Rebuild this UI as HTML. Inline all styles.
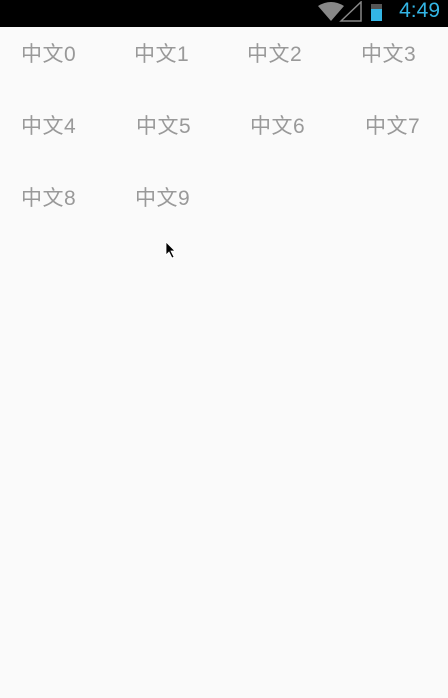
<!DOCTYPE html>
<html><head><style>
body{margin:0;width:448px;height:698px;background:#fafafa;position:relative;overflow:hidden;font-family:"Liberation Sans","Noto Sans CJK SC",sans-serif}
.sb{position:absolute;left:0;top:0;width:448px;height:27px;background:#000}
.t{position:absolute;font-size:21px;color:#999;line-height:24px;white-space:nowrap;letter-spacing:0.5px}
.clk{position:absolute;right:8px;top:0;color:#33b5e5;font-size:21px;line-height:22px}
</style></head><body>
<div class="sb">
<svg style="position:absolute;left:317px;top:1px" width="72" height="22">
<path d="M1 5 Q14 -3 27 5 L14 20 Z" fill="#888"/>
<path d="M24 20 L44 1 L44 20 Z" fill="none" stroke="#888" stroke-width="1.5"/>
<rect x="54" y="3" width="11" height="17" fill="#33b5e5"/>
<rect x="54" y="3" width="11" height="5" fill="#555"/>
</svg>
<div class="clk">4:49</div>
</div>
<div class="t" style="left:21px;top:43px">中文0</div>
<div class="t" style="left:134px;top:43px">中文1</div>
<div class="t" style="left:247px;top:43px">中文2</div>
<div class="t" style="left:361px;top:43px">中文3</div>
<div class="t" style="left:21px;top:115px">中文4</div>
<div class="t" style="left:136px;top:115px">中文5</div>
<div class="t" style="left:250px;top:115px">中文6</div>
<div class="t" style="left:365px;top:115px">中文7</div>
<div class="t" style="left:21px;top:187px">中文8</div>
<div class="t" style="left:135px;top:187px">中文9</div>
<svg style="position:absolute;left:165px;top:241px" width="12" height="18"><path d="M1 1 L1 14 L4 11 L7 17 L9 16 L6 10 L10 10 Z" fill="#000" stroke="#fff" stroke-width="0.8"/></svg>
</body></html>
